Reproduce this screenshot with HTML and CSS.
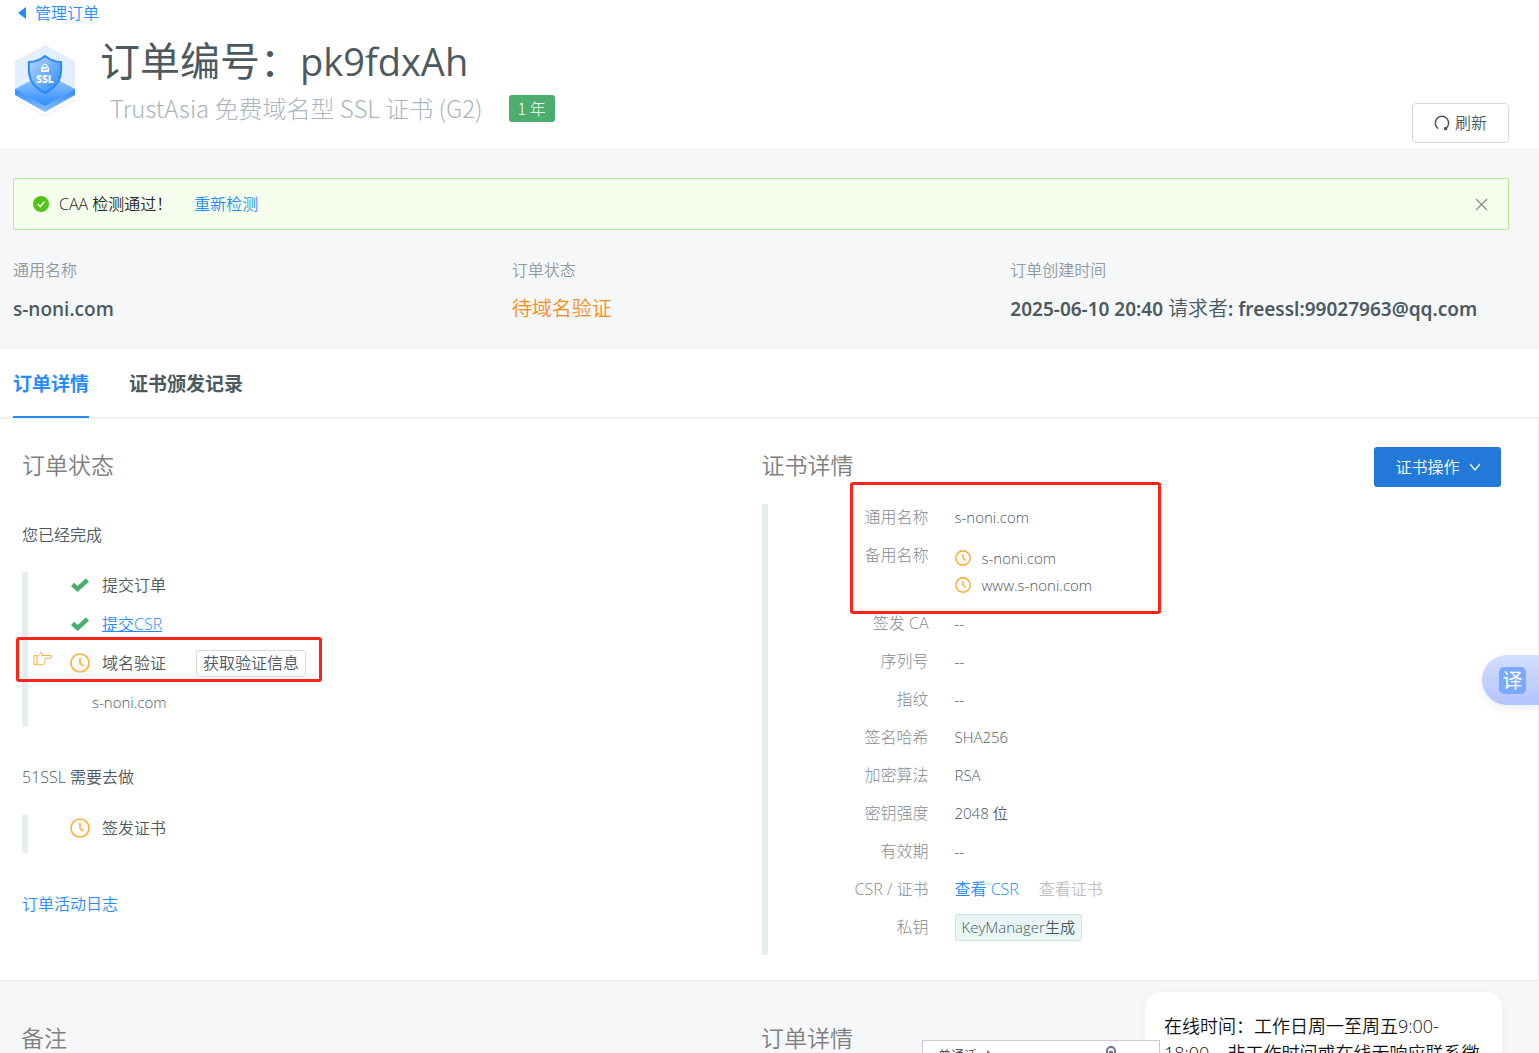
FILE: index.html
```html
<!DOCTYPE html>
<html lang="zh-CN">
<head>
<meta charset="utf-8">
<meta name="viewport" content="width=device-width, initial-scale=1">
<title>订单编号：pk9fdxAh</title>
<link rel="stylesheet" href="styles.css">
</head>
<body>
<svg width="0" height="0" class="sprite" aria-hidden="true">
  <symbol id="check" viewBox="0 0 18 14"><path d="M1.500 6.500 6.600 11 16.500 2" fill="none" stroke="currentColor" stroke-width="4.400"/></symbol>
  <symbol id="clock" viewBox="0 0 20 20"><circle cx="10" cy="10" r="9" fill="none" stroke="currentColor" stroke-width="1.7"/><path d="M10 5v5.2l3.4 3" fill="none" stroke="currentColor" stroke-width="1.7"/></symbol>
</svg>

<header class="order-header">
  <a class="back" href="#orders"><svg width="8" height="12" viewBox="0 0 8 12" aria-hidden="true"><path d="M8 0v12L0 6z" fill="currentColor"/></svg>管理订单</a>
  <div class="order-title">
    <svg class="logo" width="64" height="74" viewBox="0 0 64 74" role="img" aria-label="SSL">
      <defs>
        <linearGradient id="shield" x1="0" y1="0" x2="1" y2="1"><stop offset="0" stop-color="#b9d8ff"/><stop offset="1" stop-color="#2787fb"/></linearGradient>
        <linearGradient id="slab" x1="0" y1="0" x2="0" y2="1"><stop offset="0" stop-color="#a6cdff"/><stop offset="1" stop-color="#268bff"/></linearGradient>
        <linearGradient id="side" x1="0" y1="0" x2="0" y2="1"><stop offset="0" stop-color="#2a8cff"/><stop offset="1" stop-color="#8cc0ff"/></linearGradient>
      </defs>
      <path d="M2 57 31 73 63 56" fill="none" stroke="#e6f0fd"/>
      <path d="M31 2 61 18v34L31 68 1 52V18z" fill="#e3efff"/>
      <path d="M31 30 61 46 31 64 1 46z" fill="url(#slab)"/>
      <path d="M1 46 31 63 61 46v6L31 69 1 52z" fill="url(#side)"/>
      <path d="M31 13c5 4 10 6 16 6 1 15-1 23-16 31-15-8-17-16-16-31 6 0 11-2 16-6z" fill="url(#shield)" stroke="#268bff" stroke-width="2"/>
      <path d="M29 24v-1a2 2 0 0 1 4 0v1" fill="none" stroke="#fff"/>
      <rect x="27" y="24" width="8" height="5" rx="1" fill="#fff"/>
      <path d="m29 26 2 1 3-2" fill="none" stroke="#5ea6fb" stroke-width="1"/>
      <text x="31" y="40" class="logo-text">SSL</text>
    </svg>
    <div class="titles">
      <h1>订单编号：<span class="order-id">pk9fdxAh</span></h1>
      <p class="product">TrustAsia 免费域名型 SSL 证书 (G2)<span class="badge">1 年</span></p>
    </div>
    <button class="btn" type="button"><svg width="16" height="16" viewBox="0 0 16 16" aria-hidden="true"><path d="M4.2 13.6A6.7 6.7 0 1 1 11.8 13.5" fill="none" stroke="currentColor" stroke-width="1.5"/><path d="M10 12.2h3.2v3H10z" fill="currentColor"/></svg>刷新</button>
  </div>
</header>

<section class="summary">
  <div class="alert" role="status">
    <svg width="16" height="16" viewBox="0 0 16 16" aria-hidden="true"><circle cx="8" cy="8" r="8" fill="#52c41a"/><path d="m5 8 2.3 2.6 4-5" fill="none" stroke="#fff" stroke-width="1.4"/></svg>
    <span>CAA 检测通过！</span>
    <a href="#recheck">重新检测</a>
    <button class="close" type="button" aria-label="关闭"><svg width="13" height="13" viewBox="0 0 13 13"><path d="m1 1 11 11M12 1 1 12" fill="none" stroke="currentColor" stroke-width="1.4"/></svg></button>
  </div>
  <dl class="facts">
    <div><dt>通用名称</dt><dd>s-noni.com</dd></div>
    <div><dt>订单状态</dt><dd class="pending">待域名验证</dd></div>
    <div><dt>订单创建时间</dt><dd class="created">2025-06-10 20:40 <span class="thin">请求者</span>: freessl:99027963@qq.com</dd></div>
  </dl>
</section>

<nav class="tabs">
  <a class="tab active" href="#detail">订单详情</a>
  <a class="tab" href="#records">证书颁发记录</a>
</nav>

<main class="panel">
  <section>
    <h2>订单状态</h2>
    <h3>您已经完成</h3>
    <ul class="steps">
      <li><svg class="tick"><use href="#check"/></svg>提交订单</li>
      <li><svg class="tick"><use href="#check"/></svg><a class="underlined" href="#csr">提交CSR</a></li>
      <li class="current">
        <svg class="hand" viewBox="0 0 20 16" aria-hidden="true"><path d="M1 4.500h3v9H1zM4 5.500C6 4.500 7 3 7.500 1.500 9 1 9.500 2.500 8.500 4.500H18q1.500 1.200 0 2.500h-6q1.500 1.200 0 2.300 1 1.200-.5 2.200 .5 1.500-.8 2.200H6L4 12.500" fill="none" stroke="currentColor"/></svg>
        <svg class="clock"><use href="#clock"/></svg>域名验证
        <button class="small-btn" type="button">获取验证信息</button>
        <span class="mark mark-step"></span>
      </li>
      <li class="domain">s-noni.com</li>
    </ul>
    <h3>51SSL 需要去做</h3>
    <ul class="steps">
      <li><svg class="clock"><use href="#clock"/></svg>签发证书</li>
    </ul>
    <a class="log" href="#log">订单活动日志</a>
  </section>

  <section>
    <div class="panel-head">
      <h2>证书详情</h2>
      <button class="primary" type="button">证书操作<svg width="10" height="8" viewBox="0 0 10 8" aria-hidden="true"><path d="m0 1 5 6 5-6" fill="none" stroke="currentColor" stroke-width="1.2"/></svg></button>
    </div>
    <dl class="cert">
      <dt>通用名称</dt><dd>s-noni.com</dd>
      <dt>备用名称</dt>
      <dd class="names">
        <div><svg class="clock-sm"><use href="#clock"/></svg>s-noni.com</div>
        <div><svg class="clock-sm"><use href="#clock"/></svg>www.s-noni.com</div>
      </dd>
      <dt>签发 CA</dt><dd>--</dd>
      <dt>序列号</dt><dd>--</dd>
      <dt>指纹</dt><dd>--</dd>
      <dt>签名哈希</dt><dd>SHA256</dd>
      <dt>加密算法</dt><dd>RSA</dd>
      <dt>密钥强度</dt><dd>2048 位</dd>
      <dt>有效期</dt><dd>--</dd>
      <dt>CSR / 证书</dt><dd class="links"><a href="#csr">查看 CSR</a><span class="disabled">查看证书</span></dd>
      <dt>私钥</dt><dd><span class="tag">KeyManager生成</span></dd>
      <div class="mark mark-cert"></div>
    </dl>
  </section>
</main>

<footer class="below">
  <h2>备注</h2>
  <h2>订单详情</h2>
</footer>

<aside class="chat">在线时间：工作日周一至周五9:00-18:00，非工作时间或在线无响应联系微信</aside>
<div class="voice"><span>普通话</span><svg width="8" height="10" viewBox="0 0 8 10" aria-hidden="true"><path d="m1 0 6 5-6 5z" fill="#6d7391"/></svg><svg class="mic" width="14" height="18" viewBox="0 0 14 18" aria-hidden="true"><path d="M3 9V5a4 4 0 0 1 8 0v4M5 6h4" fill="none" stroke="#6d7391" stroke-width="2"/></svg></div>
<button class="translate" type="button"><span>译</span></button>
</body>
</html>
```
FILE: styles.css
```css
* { box-sizing: border-box; }
body {
  margin: 0;
  height: 100vh;
  overflow: hidden;
  position: relative;
  background: #f5f7f9;
  color: #4c5a60;
  font: 350 16px/26px "Open Sans", "Noto Sans CJK SC", sans-serif;
}
h1, h2, h3, p, ul, dl, dd { margin: 0; padding: 0; font-weight: 350; }
ul { list-style: none; }
a { color: #268bff; text-decoration: none; }
button { font: inherit; color: inherit; cursor: pointer; padding: 0; }
.sprite { position: absolute; }

.order-header { height: 148px; padding: 0 30px 0 13px; background: #fff; }
.back { display: flex; align-items: center; gap: 9px; padding-left: 5px; width: max-content; }
.order-title { display: flex; }
.logo { flex: none; margin: 17px 22px 0 1px; }
.logo-text { font: 800 10px "Open Sans", sans-serif; fill: #fff; text-anchor: middle; }
.titles { flex: 1; }
h1 { font-size: 40px; line-height: 60px; padding-top: 5px; font-weight: 400; }
.order-id { font-size: 38px; }
.product {
  display: flex; align-items: center; gap: 26px; padding: 0 0 0 10px;
  font: 300 24px/34px "Noto Sans CJK SC", sans-serif; color: #abb5be;
}
.badge { padding: 0 9px; border-radius: 3px; background: #4bae6f; color: #fff; font-size: 16px; line-height: 27px; }
.btn {
  display: flex; align-items: center; justify-content: center; gap: 5px;
  align-self: flex-start; margin-top: 77px; width: 97px; height: 40px;
  background: #fff; border: 1px solid #d9d9d9; border-radius: 4px;
}

.summary { padding: 30px 30px 26px 13px; }
.alert {
  display: flex; align-items: center; height: 52px; padding: 0 20px 0 19px;
  background: #f6ffed; border: 1px solid #b7eb8f; border-radius: 2px; color: #262626;
}
.alert span { margin: 0 22px 0 10px; }
.close { display: flex; margin-left: auto; border: 0; background: none; color: #8b8f8b; }
.facts { display: grid; grid-template-columns: repeat(3, 1fr); padding-top: 27px; }
.facts dt { color: #8f9ba3; }
.facts dd { padding-top: 12px; font-size: 19px; line-height: 28px; font-weight: 600; white-space: nowrap; }
.facts .created { font-family: "Noto Sans", "Noto Sans CJK SC", sans-serif; }
.facts .pending { color: #fa8c16; font-size: 20px; font-weight: 350; }
.thin { font-size: 20px; font-weight: 350; }

.tabs { display: flex; gap: 40px; padding: 0 13px; background: #fff; border-bottom: 2px solid #f0f0f0; }
.tab { margin-bottom: -1px; padding: 22px 0 19px; border-bottom: 2px solid transparent; font-size: 19px; line-height: 26px; font-weight: 700; color: #4c5a60; }
.tab.active { color: #268bff; border-color: #268bff; }

.panel {
  display: grid; grid-template-columns: 1fr 1fr; padding: 29px 37px 25px 22px;
  background: #fff; border: solid #ebeef0; border-width: 0 1px 1px 0;
}
h2 { font-size: 23px; line-height: 34px; color: #808080; }
h3 { font-size: 16px; line-height: 26px; }
.panel h3 { padding: 40px 0 24px; }
.panel .steps + h3 { padding: 37px 0 25px; }
.steps { display: flow-root; border-left: 6px solid #e8edf0; padding-left: 42px; }
.steps li { position: relative; display: flex; align-items: center; height: 26px; margin-bottom: 13px; }
.steps li:last-child { margin-bottom: 12px; }
.tick { width: 20px; height: 14px; margin-right: 12px; color: #4bae6f; }
.clock { width: 20px; height: 20px; margin-right: 12px; color: #ffb13d; }
.hand { position: absolute; left: -37px; top: 1px; width: 20px; height: 16px; color: #ffb13d; }
.underlined { text-decoration: underline; }
.small-btn { margin-left: 30px; width: 110px; height: 27px; line-height: 25px; border: 1px solid #d9d9d9; border-radius: 3px; background: #fff; }
.steps .domain { padding-left: 22px; font-size: 15px; }
.log { display: block; margin-top: 38px; }

.panel-head { display: flex; justify-content: space-between; height: 57px; }
.primary {
  display: flex; align-items: center; justify-content: center; gap: 10px; margin-top: -1px;
  width: 127px; height: 40px; border: 0; border-radius: 3px; background: #2379d8; color: #fff;
}
.cert {
  position: relative; display: grid; grid-template-columns: 161px 1fr; gap: 12px 26px; margin-top: -1px;
  padding-bottom: 14px; border-left: 6px solid #e8edf0;
}
.cert dt { text-align: right; color: #858b91; font-weight: 300; }
.cert dd { font-size: 15px; }
.names { padding-top: 2px; }
.names div { display: flex; align-items: center; height: 27px; }
.clock-sm { width: 16px; height: 16px; margin-right: 11px; color: #ffa51f; }
.cert .links { display: flex; gap: 20px; font-size: 16px; }
.disabled { color: #bfbfbf; }
.tag { display: inline-block; padding: 0 6px; border: 1px solid #c9e4e2; border-radius: 2px; background: #e9f6f6; line-height: 25px; }

/* red call-out frames over the steps and the certificate names */
.mark { position: absolute; border: 3px solid #ff2418; border-radius: 3px; pointer-events: none; }
.mark-step { left: -54px; top: -13px; width: 306px; height: 45px; }
.mark-cert { left: 82px; top: -22px; width: 311px; height: 132px; }

.below { display: grid; grid-template-columns: 1fr 1fr; padding: 40px 38px 40px 21px; }

.chat {
  position: absolute; right: 37px; bottom: -59px; width: 357px; height: 120px; padding: 21px 19px;
  background: #fff; border-radius: 16px; box-shadow: 0 2px 12px rgba(0, 0, 0, .04);
  color: #111; font-size: 18px; line-height: 27px;
}
.voice {
  position: absolute; right: 379px; bottom: -17px; width: 238px; height: 30px; padding: 4px 15px;
  display: flex; align-items: center; gap: 9px; background: #fff; border: 1px solid #c8ccd6;
  font-size: 13px; line-height: 20px; color: #3d425c;
}
.mic { margin: 0 26px 0 auto; }
.translate {
  position: absolute; right: 0; bottom: 348px; width: 57px; height: 50px; padding-left: 17px; border: 0;
  border-radius: 25px 0 0 25px; background: linear-gradient(#d2dfff, #b3c3ff); box-shadow: 0 3px 10px rgba(0, 0, 0, .08);
}
.translate span { display: block; width: 27px; border-radius: 5px; background: #78a9fa; color: #fff; font-size: 20px; line-height: 27px; font-weight: 400; }
```
